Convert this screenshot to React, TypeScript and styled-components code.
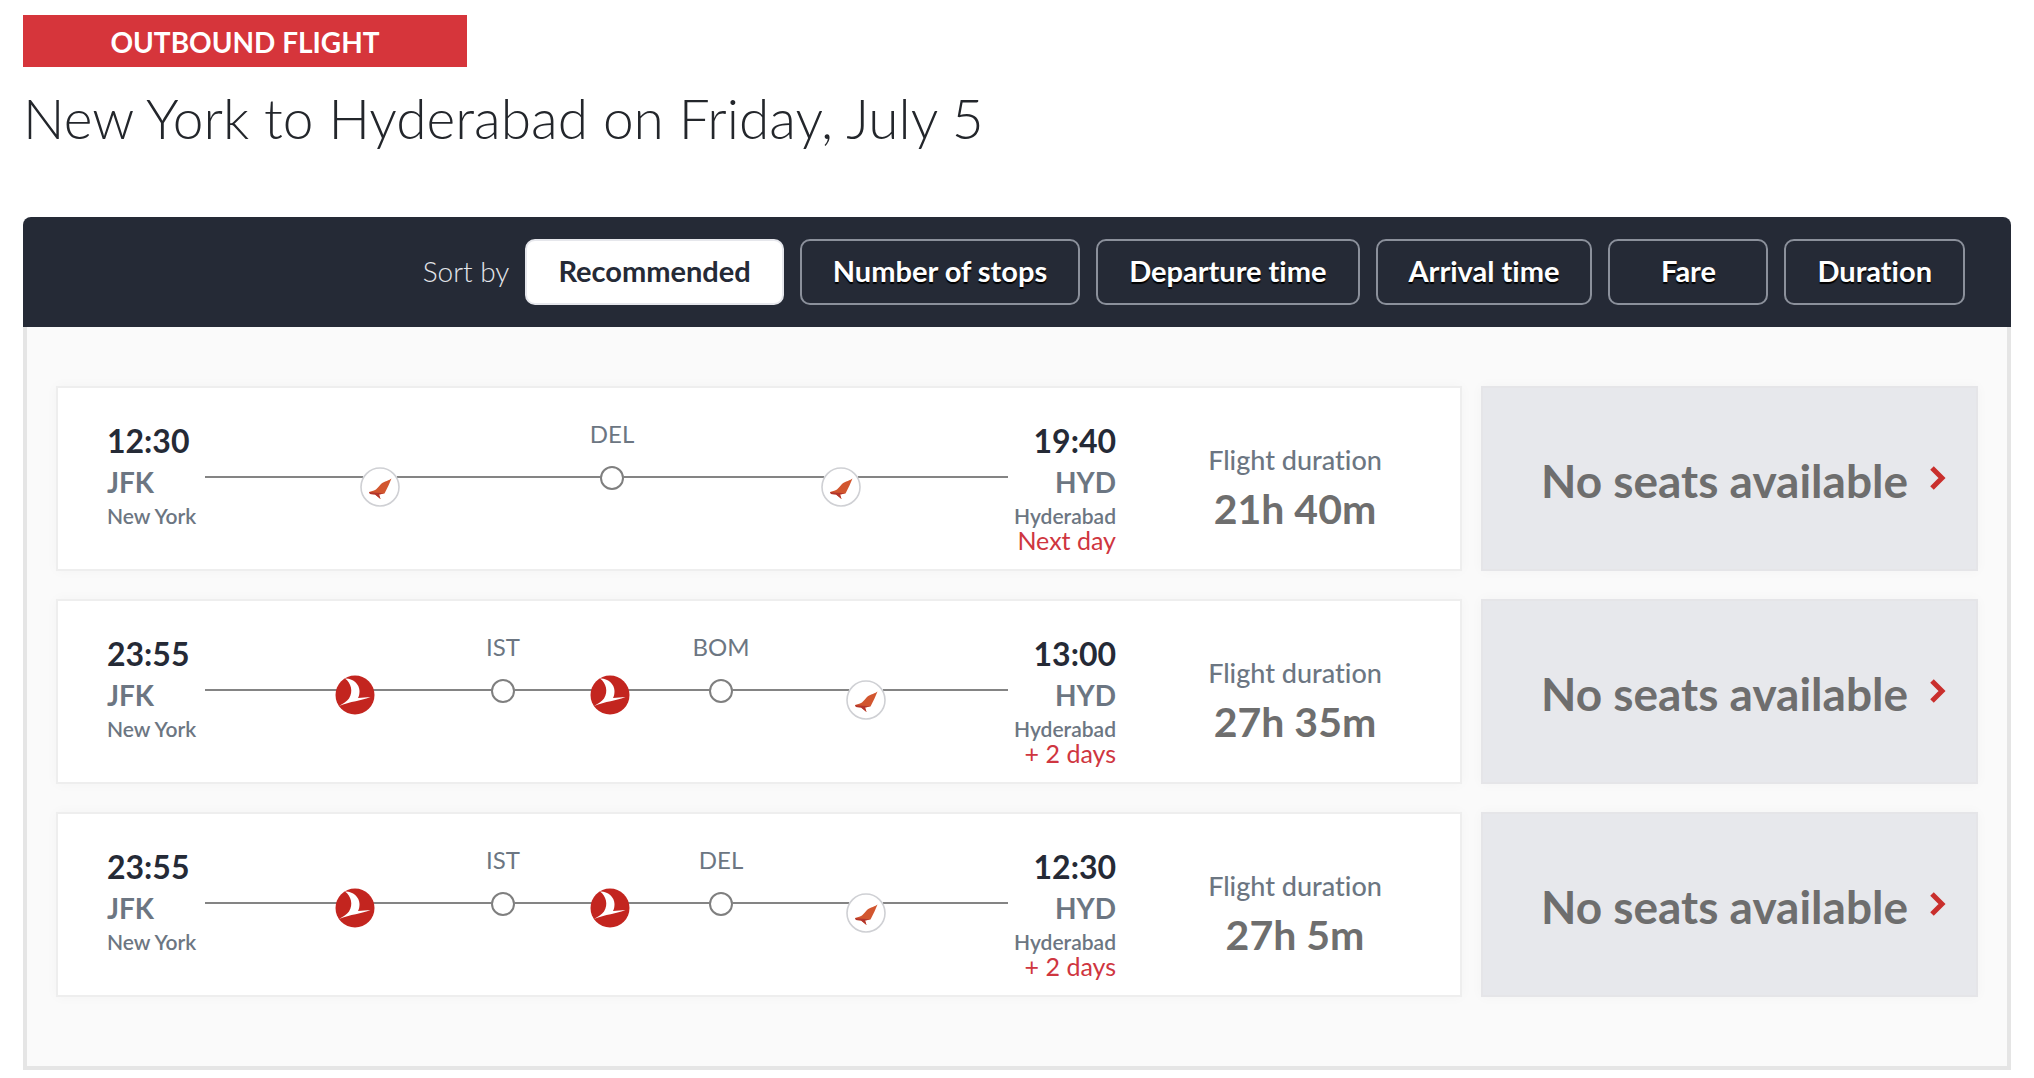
import React, { useState } from "react";
import styled, { createGlobalStyle } from "styled-components";

const GlobalStyle = createGlobalStyle`
  *, *::before, *::after { box-sizing: border-box; }
  body {
    margin: 0;
    background: #ffffff;
    color: #252a36;
    font-family: Lato, "Open Sans", sans-serif;
  }
  body, button { font-variant-ligatures: none; }
`;

const Page = styled.main`
  padding: 15px 23px 9px;
`;

const Badge = styled.div`
  width: 444px;
  height: 52px;
  background: #d6353b;
  color: #ffffff;
  font-size: 28px;
  font-weight: 700;
  line-height: 54px;
  text-align: center;
  text-transform: uppercase;
`;

const Title = styled.h1`
  margin: 15px 0 63px;
  color: #23262b;
  font-size: 55px;
  font-weight: 300;
  line-height: 72px;
`;

const SortBar = styled.div`
  display: flex;
  align-items: center;
  justify-content: flex-end;
  gap: 16px;
  padding: 22px 46px 22px 24px;
  border-radius: 8px 8px 0 0;
  background: #252a36;
`;

const SortLabel = styled.span`
  padding-bottom: 2px;
  color: #e3e5ea;
  font-size: 28px;
  font-weight: 300;
  line-height: 34px;
`;

const SortButton = styled.button<{ $active: boolean }>`
  height: 66px;
  min-width: 160px;
  padding: 0 31px 4px;
  border: 2px solid ${(p) => (p.$active ? "#e6e7ec" : "#8b909b")};
  border-radius: 10px;
  background: ${(p) => (p.$active ? "#ffffff" : "transparent")};
  color: ${(p) => (p.$active ? "#252a36" : "#ffffff")};
  text-shadow: ${(p) => (p.$active ? "none" : "0 2px 1px #000000")};
  font-family: inherit;
  font-size: 29px;
  font-weight: 700;
  white-space: nowrap;
  cursor: pointer;
`;

const Results = styled.ul`
  display: flex;
  flex-direction: column;
  gap: 28px;
  margin: 0;
  padding: 59px 29px 69px;
  border: 4px solid #e5e5e5;
  border-top: 0;
  background: #fafafa;
  list-style: none;
`;

const Row = styled.li`
  display: grid;
  grid-template-columns: 1406fr 497fr;
  gap: 19px;
`;

const Card = styled.article`
  display: flex;
  min-height: 185px;
  padding: 31px 0 0 49px;
  border: 2px solid #eeeeee;
  background: #ffffff;
  box-shadow: 0 0 12px rgba(0, 0, 0, 0.03);
`;

const Place = styled.div<{ $end?: boolean }>`
  display: flex;
  flex-direction: column;
  width: ${(p) => (p.$end ? "108px" : "98px")};
  text-align: ${(p) => (p.$end ? "right" : "left")};
  white-space: nowrap;
`;

const Time = styled.time`
  font-size: 32px;
  font-weight: 700;
  line-height: 44px;
`;

const Code = styled.span`
  color: #6c7682;
  font-size: 28px;
  font-weight: 700;
  line-height: 39px;
`;

const City = styled.span`
  color: #6c7682;
  font-size: 21px;
  font-weight: 600;
  line-height: 27px;
`;

const DayShift = styled.span`
  color: #cf3640;
  font-size: 25px;
  font-weight: 400;
  line-height: 22px;
`;

const Track = styled.div`
  display: flex;
  flex: 1;
  align-items: flex-start;
  padding-top: 47px;
`;

const Segment = styled.span<{ $grow: number }>`
  flex: ${(p) => p.$grow} 1 0;
  height: 2px;
  margin-top: 10px;
  background: #848484;
`;

const StopDot = styled.span`
  position: relative;
  width: 24px;
  height: 24px;
  border: 2px solid #7f7f7f;
  border-radius: 50%;
  background: #ffffff;
`;

const StopCode = styled.span`
  position: absolute;
  bottom: 40px;
  left: 50%;
  transform: translateX(-50%);
  color: #6c7682;
  font-size: 24px;
  line-height: 28px;
`;

const Logo = styled.svg<{ $drop: number }>`
  position: relative;
  flex: none;
  width: 40px;
  height: 40px;
  margin: ${(p) => p.$drop}px -3px 0;
`;

const Duration = styled.div`
  display: flex;
  flex-direction: column;
  align-items: center;
  width: 330px;
  margin-left: 14px;
  padding-top: 24px;
`;

const DurationLabel = styled.span`
  color: #6c7682;
  font-size: 27px;
  font-weight: 500;
  line-height: 34px;
`;

const DurationValue = styled.strong`
  color: #6e6e6e;
  font-size: 41px;
  font-weight: 700;
  line-height: 64px;
`;

const Seats = styled.button`
  display: flex;
  align-items: center;
  justify-content: flex-end;
  gap: 22px;
  padding: 3px 30px 0 0;
  border: 2px solid #e5e5e8;
  background: #e7e8ec;
  box-shadow: 0 0 12px rgba(0, 0, 0, 0.03);
  color: #6e6e6e;
  font-family: inherit;
  font-size: 46px;
  font-weight: 700;
  white-space: nowrap;
  cursor: pointer;
`;

const Chevron = styled.svg`
  width: 16px;
  height: 28px;
  fill: none;
  stroke: #c92f2d;
  stroke-width: 5;
`;

function Vistara() {
  return (
    <Logo $drop={1} viewBox="0 0 40 40" role="img" aria-label="Vistara">
      <circle cx="20" cy="20" r="19" fill="#fff" stroke="#cfd0d4" strokeWidth="1.6" />
      <path d="M31.500 11.500 C30 13 24 14.500 21 17 C18.500 19.500 17 22.500 14 23.500 L9 25 L10 27 L15 27.500 L20.500 32 L19 27.500 L24.500 26.500 L28.500 18.500 Z" fill="#d2562f" />
      <path d="M9 25 L10 27 L15 27.500 L20.500 32 L19 27.500 L24 26.500 C19 25.500 14 26 9 25 Z" fill="#b3352b" />
    </Logo>
  );
}

function Turkish() {
  return (
    <Logo $drop={-4} viewBox="0 0 40 40" role="img" aria-label="Turkish Airlines">
      <circle cx="20" cy="20" r="19.500" fill="#c3251f" />
      <path d="M10 3.500 C17 3 24.500 8.500 24.500 16 C24.500 19 24 21 23 23 L35.500 22 C27 25.500 15 26.500 4 31 C8 28.500 12 26.500 14 23.500 C18.500 16.500 16 8 10 3.500 Z" fill="#fff" />
    </Logo>
  );
}

type Point = { carrier: "vistara" | "turkish" } | { stop: string };

interface Flight {
  depart: string;
  arrive: string;
  shift: string;
  duration: string;
  points: Point[];
  spans: number[];
}

const sorts = ["Recommended", "Number of stops", "Departure time", "Arrival time", "Fare", "Duration"];

const twoStop = (via: string): Point[] => [
  { carrier: "turkish" },
  { stop: "IST" },
  { carrier: "turkish" },
  { stop: via },
  { carrier: "vistara" },
];

const twoStopSpans = [133, 119, 78, 82, 116, 125];

const flights: Flight[] = [
  {
    depart: "12:30",
    arrive: "19:40",
    shift: "Next day",
    duration: "21h 40m",
    points: [{ carrier: "vistara" }, { stop: "DEL" }, { carrier: "vistara" }],
    spans: [158, 203, 200, 150],
  },
  { depart: "23:55", arrive: "13:00", shift: "+ 2 days", duration: "27h 35m", points: twoStop("BOM"), spans: twoStopSpans },
  { depart: "23:55", arrive: "12:30", shift: "+ 2 days", duration: "27h 5m", points: twoStop("DEL"), spans: twoStopSpans },
];

function Marker({ point }: { point: Point }) {
  if ("stop" in point) {
    return (
      <StopDot>
        <StopCode>{point.stop}</StopCode>
      </StopDot>
    );
  }
  return point.carrier === "vistara" ? <Vistara /> : <Turkish />;
}

function FlightRow({ flight }: { flight: Flight }) {
  return (
    <Row>
      <Card>
        <Place>
          <Time>{flight.depart}</Time>
          <Code>JFK</Code>
          <City>New York</City>
        </Place>
        <Track>
          {flight.spans.map((span, i) => (
            <React.Fragment key={i}>
              <Segment $grow={span} />
              {flight.points[i] && <Marker point={flight.points[i]} />}
            </React.Fragment>
          ))}
        </Track>
        <Place $end>
          <Time>{flight.arrive}</Time>
          <Code>HYD</Code>
          <City>Hyderabad</City>
          <DayShift>{flight.shift}</DayShift>
        </Place>
        <Duration>
          <DurationLabel>Flight duration</DurationLabel>
          <DurationValue>{flight.duration}</DurationValue>
        </Duration>
      </Card>
      <Seats type="button">
        No seats available
        <Chevron viewBox="0 0 16 28" aria-hidden="true">
          <path d="M2 2 L12 12 L2 22" />
        </Chevron>
      </Seats>
    </Row>
  );
}

export default function App() {
  const [active, setActive] = useState(sorts[0]);
  return (
    <>
      <GlobalStyle />
      <Page>
        <Badge>Outbound flight</Badge>
        <Title>New York to Hyderabad on Friday, July 5</Title>
        <SortBar>
          <SortLabel>Sort by</SortLabel>
          {sorts.map((name) => (
            <SortButton key={name} type="button" $active={name === active} onClick={() => setActive(name)}>
              {name}
            </SortButton>
          ))}
        </SortBar>
        <Results>
          {flights.map((flight, i) => (
            <FlightRow key={i} flight={flight} />
          ))}
        </Results>
      </Page>
    </>
  );
}
